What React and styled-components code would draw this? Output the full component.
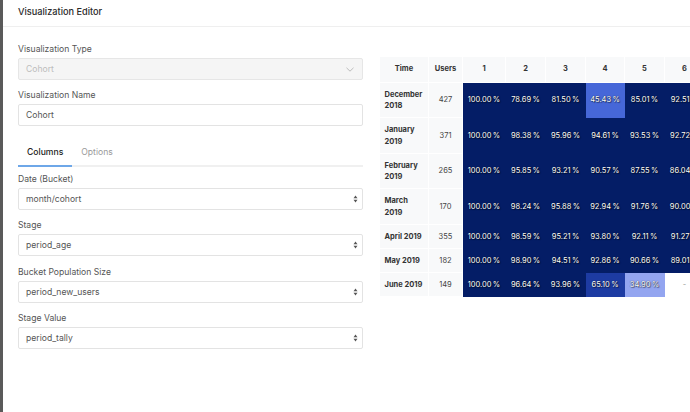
import React from 'react';
import styled, { createGlobalStyle } from 'styled-components';

const GlobalStyle = createGlobalStyle`
  html, body {
    margin: 0;
    padding: 0;
    background: #fff;
    overflow: hidden;
  }
  body {
    font-family: Inter, "Liberation Sans", Arial, sans-serif;
    color: #333;
  }
`;

const Page = styled.div`
  display: flex;
  flex-direction: column;
  height: 100vh;
  border-left: 3px solid #5a5a5a;
  box-sizing: border-box;
  overflow: hidden;
`;

const Header = styled.div`
  height: 27px;
  box-sizing: border-box;
  padding: 0 15px 4px;
  display: flex;
  align-items: center;
  border-bottom: 1px solid #efefef;
  font-size: 9.2px;
  font-weight: 500;
  color: #2b2b2b;
`;

const Body = styled.div`
  display: flex;
  gap: 16px;
  padding: 16px 0 0 15px;
  min-height: 0;
`;

const EditorColumn = styled.div`
  width: 345px;
  flex: none;
`;

const PreviewColumn = styled.div`
  flex: 1;
  min-width: 0;
  overflow: hidden;
  padding-top: 14px;
`;

const Field = styled.div`
  margin-bottom: 9.4px;
`;

const Label = styled.label`
  display: block;
  font-size: 8.6px;
  line-height: 12px;
  color: #555;
  margin-bottom: 3px;
`;

const Control = styled.div`
  height: 22px;
  box-sizing: border-box;
  border: 1px solid ${p => (p.disabled ? '#e6e6e6' : '#e3e3e3')};
  background: ${p => (p.disabled ? '#f5f5f5' : '#fff')};
  border-radius: 2px;
  padding: 0 ${p => (p.native ? 4 : 8)}px 0 7px;
  display: flex;
  align-items: center;
  justify-content: space-between;
  font-size: 8.6px;
  color: ${p => (p.disabled ? '#bdbdbd' : '#555')};
`;

const Tabs = styled.div`
  display: flex;
  border-bottom: 2px solid #f0f0f0;
  margin-bottom: 6px;
`;

const Tab = styled.div`
  padding: 10px 9px 7px;
  line-height: 12px;
  font-size: 8.6px;
  font-weight: ${p => (p.active ? 500 : 400)};
  color: ${p => (p.active ? '#222' : '#9a9a9a')};
  border-bottom: 2px solid ${p => (p.active ? '#6ea7e8' : 'transparent')};
  margin-bottom: -2px;
`;

const Table = styled.table`
  border-collapse: collapse;
  table-layout: fixed;
  width: 325px;
  font-size: 7.5px;
  line-height: 11.5px;
`;

const HeadCell = styled.th`
  padding: 6px 4px 7px;
  background: #f8f9fa;
  border: 1px solid #fff;
  border-top: none;
  font-weight: 700;
  color: #333;
  text-align: center;
`;

const TimeCell = styled.td`
  padding: 6px 5px 5.5px;
  background: #f8f9fa;
  border: 1px solid #fff;
  border-left: none;
  font-weight: 700;
  color: #333;
  text-align: left;
`;

const UsersCell = styled.td`
  padding: 6px 4px 5.5px;
  background: #f8f9fa;
  border: 1px solid #fff;
  color: #444;
  text-align: center;
`;

const ValueCell = styled.td`
  padding: 6px 2px 5.5px;
  background: ${p => p.$bg};
  border: 1px solid ${p => p.$bg};
  color: ${p => (p.$empty ? '#999' : '#fff')};
  text-shadow: ${p => (p.$empty ? 'none' : '0 0 1px rgba(0,0,0,0.9), 1px 1px 1px rgba(0,0,0,0.5)')};
  text-align: center;
  white-space: nowrap;
`;

const NAVY = '#041d66';

const ChevronDown = () => (
  <svg width="8" height="5" viewBox="0 0 8 5">
    <path d="M0.5 0.8 L4 4.2 L7.5 0.8" fill="none" stroke="#bcbcbc" strokeWidth="1" />
  </svg>
);

const UpDown = () => (
  <svg width="5" height="8" viewBox="0 0 5 8">
    <path d="M2.5 0.5 L4.5 3.2 L0.5 3.2 Z" fill="#555" />
    <path d="M2.5 7.5 L4.5 4.8 L0.5 4.8 Z" fill="#555" />
  </svg>
);

const pct = v => `${v}\u2009%`;

const rows = [
  { time: 'December 2018', users: 427, values: ['100.00', '78.69', '81.50', ['45.43', '#4667d8'], '85.01', '92.51'] },
  { time: 'January 2019', users: 371, values: ['100.00', '98.38', '95.96', '94.61', '93.53', '92.72'] },
  { time: 'February 2019', users: 265, values: ['100.00', '95.85', '93.21', '90.57', '87.55', '86.04'] },
  { time: 'March 2019', users: 170, values: ['100.00', '98.24', '95.88', '92.94', '91.76', '90.00'] },
  { time: 'April 2019', users: 355, values: ['100.00', '98.59', '95.21', '93.80', '92.11', '91.27'] },
  { time: 'May 2019', users: 182, values: ['100.00', '98.90', '94.51', '92.86', '90.66', '89.01'] },
  { time: 'June 2019', users: 149, values: ['100.00', '96.64', '93.96', ['65.10', '#1d3ba2'], ['34.90', '#93a5f0'], null] },
];

const colWidths = [49, 34, 43, 40, 40, 39, 40, 40];

const SelectField = ({ label, value }) => (
  <Field>
    <Label>{label}</Label>
    <Control native>
      <span>{value}</span>
      <UpDown />
    </Control>
  </Field>
);

export default function App() {
  return (
    <>
      <GlobalStyle />
      <Page>
        <Header>Visualization Editor</Header>
        <Body>
          <EditorColumn>
            <Field>
              <Label>Visualization Type</Label>
              <Control disabled>
                <span>Cohort</span>
                <ChevronDown />
              </Control>
            </Field>
            <Field>
              <Label>Visualization Name</Label>
              <Control>
                <span>Cohort</span>
              </Control>
            </Field>
            <Tabs>
              <Tab active>Columns</Tab>
              <Tab>Options</Tab>
            </Tabs>
            <SelectField label="Date (Bucket)" value="month/cohort" />
            <SelectField label="Stage" value="period_age" />
            <SelectField label="Bucket Population Size" value="period_new_users" />
            <SelectField label="Stage Value" value="period_tally" />
          </EditorColumn>
          <PreviewColumn>
            <Table>
              <colgroup>
                {colWidths.map((w, i) => (
                  <col key={i} style={{ width: w }} />
                ))}
              </colgroup>
              <thead>
                <tr>
                  <HeadCell>Time</HeadCell>
                  <HeadCell>Users</HeadCell>
                  {[1, 2, 3, 4, 5, 6].map(n => (
                    <HeadCell key={n}>{n}</HeadCell>
                  ))}
                </tr>
              </thead>
              <tbody>
                {rows.map(r => (
                  <tr key={r.time}>
                    <TimeCell>{r.time}</TimeCell>
                    <UsersCell>{r.users}</UsersCell>
                    {r.values.map((v, i) => {
                      if (v === null) {
                        return (
                          <ValueCell key={i} $bg="#fff" $empty>
                            -
                          </ValueCell>
                        );
                      }
                      const [text, bg] = Array.isArray(v) ? v : [v, NAVY];
                      return (
                        <ValueCell key={i} $bg={bg}>
                          {pct(text)}
                        </ValueCell>
                      );
                    })}
                  </tr>
                ))}
              </tbody>
            </Table>
          </PreviewColumn>
        </Body>
      </Page>
    </>
  );
}
